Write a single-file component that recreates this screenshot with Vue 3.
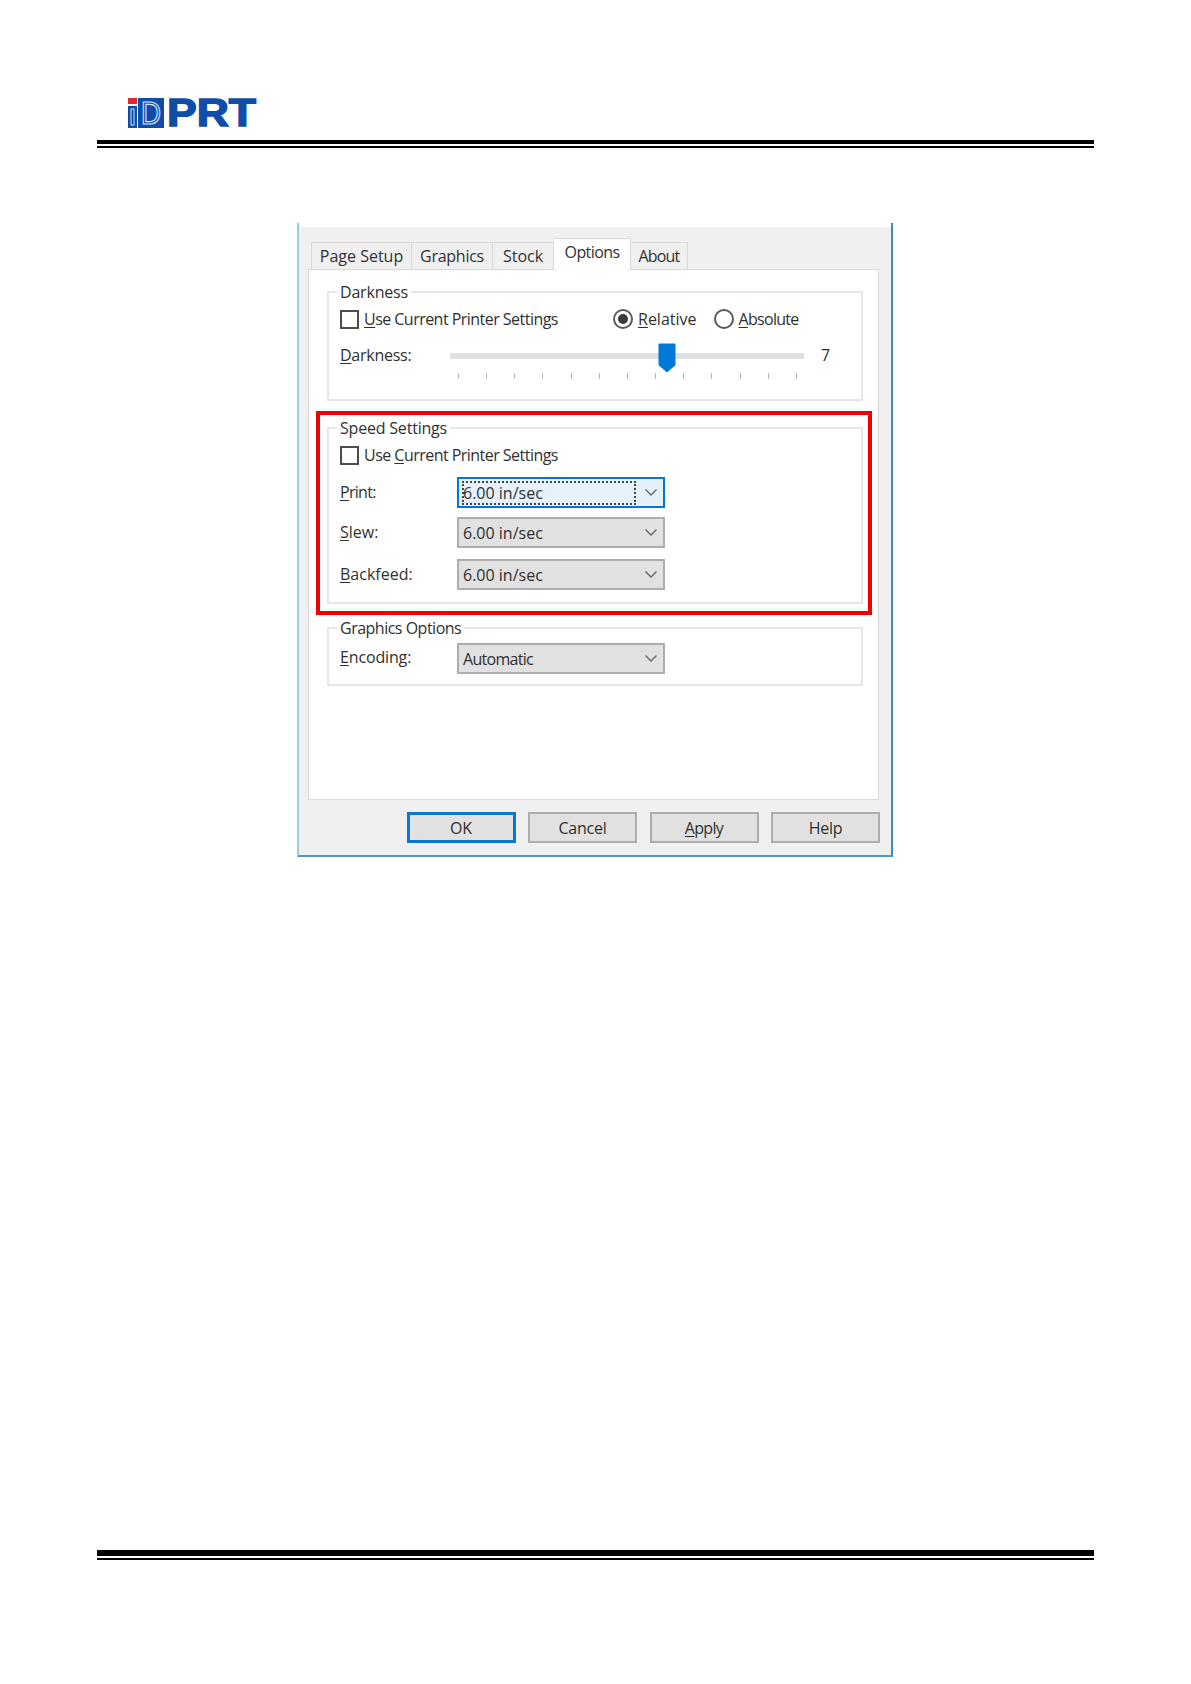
<script setup>
const ticks = Array.from({ length: 13 }, (_, i) => i)
const speedRows = [
  { label: 'P', rest: 'rint:', value: '6.00 in/sec', focus: true, cls: 'r1', tight: 'ls-print' },
  { label: 'S', rest: 'lew:', value: '6.00 in/sec', focus: false, cls: 'r2', tight: '' },
  { label: 'B', rest: 'ackfeed:', value: '6.00 in/sec', focus: false, cls: 'r3', tight: '' }
]
const buttons = [
  { key: '', post: 'OK', primary: true, tight: '' },
  { key: '', post: 'Cancel', tight: 'ls-small' },
  { key: 'A', post: 'pply', tight: 'ls-apply' },
  { key: '', post: 'Help', tight: 'ls-small' }
]
</script>

<template>
  <div class="page">
    <header class="head">
      <svg class="logo" width="130" height="46" viewBox="0 -8 130 46" aria-label="iDPRT">
        <rect x="1" y="0" width="9" height="6" fill="#e0262e" />
        <rect x="1" y="8" width="9" height="22" fill="#0f4ea8" />
        <rect x="4" y="11" width="3" height="16" fill="none" stroke="#cfe0f5" stroke-width="1" />
        <rect x="11" y="0" width="26" height="30" fill="#0f4ea8" />
        <text x="14" y="26" class="logo-d" font-size="31" textLength="20" lengthAdjust="spacingAndGlyphs">D</text>
        <text x="40" y="28" class="logo-prt" font-size="39" textLength="89" lengthAdjust="spacingAndGlyphs">PRT</text>
      </svg>
      <div class="rule-thick"></div>
      <div class="rule-thin"></div>
    </header>

    <section class="dialog">
      <div class="strip"></div>
      <div class="tabs">
        <div class="tab t1">Page Setup</div>
        <div class="tab t2 ls-small">Graphics</div>
        <div class="tab t3">Stock</div>
        <div class="tab t4 active">Options</div>
        <div class="tab t5">About</div>
      </div>

      <div class="panel">
        <div class="group g-dark">
          <div class="legend">Darkness</div>
          <div class="check-row">
            <label class="check"><span class="box"></span><span class="ls-check"><u>U</u>se Current Printer Settings</span></label>
            <div class="radios">
              <span class="radio on"><i></i></span><span class="rl"><u>R</u>elative</span>
              <span class="radio r-abs"><i></i></span><span class="rl ls-abs"><u>A</u>bsolute</span>
            </div>
          </div>
          <div class="slider-row">
            <span class="slabel"><u>D</u>arkness:</span>
            <div class="slider">
              <div class="track"></div>
              <svg class="thumb" width="18" height="30" viewBox="0 0 18 30"><path d="M1 1h16v21l-8 7-8-7z" fill="#0078d7" stroke="#0078d7" stroke-linejoin="round" /></svg>
              <div class="ticks"><span v-for="t in ticks" :key="t" class="tick"></span></div>
            </div>
            <span class="value">7</span>
          </div>
        </div>

        <div class="group g-speed">
          <div class="legend">Speed Settings</div>
          <div class="check-row">
            <label class="check"><span class="box"></span><span class="ls-check">Use <u>C</u>urrent Printer Settings</span></label>
          </div>
          <div v-for="r in speedRows" :key="r.label" class="combo-row" :class="r.cls">
            <span class="clabel" :class="r.tight"><u>{{ r.label }}</u>{{ r.rest }}</span>
            <div class="combo" :class="{ focus: r.focus }">
              <span class="ctext">{{ r.value }}</span>
              <svg class="chev" width="14" height="9" viewBox="0 0 14 9"><path d="M1.5 1.5 7 7l5.500-5.500" fill="none" stroke="#666" stroke-width="1.400" /></svg>
            </div>
          </div>
        </div>

        <div class="group g-gfx">
          <div class="legend ls-gfx">Graphics Options</div>
          <div class="combo-row r4">
            <span class="clabel enc"><u>E</u>ncoding:</span>
            <div class="combo">
              <span class="ctext ls-auto">Automatic</span>
              <svg class="chev" width="14" height="9" viewBox="0 0 14 9"><path d="M1.5 1.5 7 7l5.500-5.500" fill="none" stroke="#666" stroke-width="1.400" /></svg>
            </div>
          </div>
        </div>
      </div>

      <div class="actions">
        <button v-for="b in buttons" :key="b.post" class="btn" :class="[{ primary: b.primary }, b.tight]" type="button"><u v-if="b.key">{{ b.key }}</u>{{ b.post }}</button>
      </div>

      <div class="callout"></div>
    </section>

    <footer class="foot">
      <div class="frule-thick"></div>
      <div class="rule-thin"></div>
    </footer>
  </div>
</template>

<style scoped>
.page {
  width: 1191px;
  height: 1684px;
  background: #fff;
  overflow: hidden;
  font-family: "Open Sans", "Noto Sans", sans-serif;
  color: #303030;
  font-size: 16px;
}
u { text-underline-offset: 2px; text-decoration-thickness: 1px; }
.head { padding: 98px 97px 0; }
.logo { display: block; margin: -8px 0 -7px 30px; }
.logo-d { font-family: "Liberation Sans", sans-serif; fill: none; stroke: #d5e3f6; stroke-width: 1.200px; }
.logo-prt { font-family: "Liberation Sans", sans-serif; font-weight: 700; fill: #0f4ea8; stroke: #0f4ea8; stroke-width: 1.500px; }
.rule-thick { height: 4px; background: #000; margin-top: 11px; }
.rule-thin { height: 2px; background: #000; margin-top: 2px; }

.dialog {
  position: relative;
  box-sizing: border-box;
  width: 596px;
  height: 634px;
  margin: 75px 0 0 297px;
  border-left: 2px solid #9ccbe6;
  border-right: 2px solid #3a8cc8;
  border-bottom: 2px solid #4f97c9;
  background: #f0f0f0;
}
.strip { height: 4px; background: #fff; }

.tabs { display: flex; align-items: flex-end; height: 42px; padding-left: 12px; }
.tab {
  box-sizing: border-box;
  height: 27px;
  display: flex;
  align-items: center;
  justify-content: center;
  border: 1px solid #d9d9d9;
  border-bottom: 0;
  border-left-width: 0;
  line-height: 1;
}
.t1 { width: 101px; border-left-width: 1px; }
.t2 { width: 81px; }
.t3 { width: 61px; }
.t4 { width: 77px; letter-spacing: -0.6px; }
.t5 { width: 57px; letter-spacing: -0.8px; }
.active {
  height: 32px;
  background: #fff;
  margin-bottom: -1px;
  position: relative;
  z-index: 1;
  padding-bottom: 5px;
}

.panel {
  box-sizing: border-box;
  width: 571px;
  height: 531px;
  margin-left: 9px;
  padding: 21px 15px 0 18px;
  background: #fff;
  border: 1px solid #d9d9d9;
}
.group {
  box-sizing: border-box;
  border: 2px solid #e6e6e6;
  padding-left: 11px;
  padding-right: 11px;
}
.g-dark { height: 110px; }
.g-speed { height: 177px; margin-top: 26px; }
.g-gfx { height: 59px; margin-top: 23px; }
.legend {
  display: table;
  height: 22px;
  line-height: 22px;
  margin: -12px 0 0 -3px;
  padding: 0 3px;
  background: #fff;
  letter-spacing: -0.2px;
}
.ls-small { letter-spacing: -0.25px; }
.ls-check { letter-spacing: -0.53px; }
.ls-abs { letter-spacing: -0.7px; }
.ls-gfx { letter-spacing: -0.5px; }
.ls-print { letter-spacing: -0.7px; }
.ls-auto { letter-spacing: -0.7px; }
.ls-apply { letter-spacing: -0.7px; }

.check-row { display: flex; align-items: center; height: 30px; margin-top: 1px; }
.check { display: flex; align-items: center; gap: 5px; width: 273px; flex: none; }
.box { box-sizing: border-box; width: 19px; height: 19px; border: 2px solid #4d4d4d; background: #fff; flex: none; }
.radios { display: flex; align-items: center; }
.radio {
  box-sizing: border-box;
  width: 20px;
  height: 20px;
  border: 2px solid #5a5a5a;
  border-radius: 50%;
  display: flex;
  align-items: center;
  justify-content: center;
}
.radio i { width: 10px; height: 10px; border-radius: 50%; }
.radio.on i { background: #3a3a3a; }
.rl { margin-left: 5px; }
.r-abs { margin-left: 17px; }

.slider-row { display: flex; margin-top: 7px; height: 30px; align-items: center; }
.slabel { width: 110px; flex: none; padding-bottom: 2px; letter-spacing: -0.25px; }
.slider { position: relative; width: 354px; height: 30px; flex: none; }
.track { position: absolute; left: 0; right: 0; top: 12px; height: 6px; background: #e0e0e0; }
.thumb { position: absolute; left: 208px; top: 2px; }
.ticks {
  position: absolute;
  left: 8px;
  width: 339px;
  top: 32px;
  display: flex;
  justify-content: space-between;
}
.tick { width: 1px; height: 6px; background: #b5b5b5; }
.value { margin-left: 17px; padding-bottom: 2px; }

.combo-row { display: flex; align-items: center; }
.clabel { width: 117px; flex: none; padding-bottom: 2px; }
.clabel.enc { padding-bottom: 4px; letter-spacing: -0.15px; }
.r1 { margin-top: 7px; }
.r2 { margin-top: 9px; }
.r3 { margin-top: 11px; }
.r4 { margin-top: 4px; }
.combo {
  box-sizing: border-box;
  width: 208px;
  height: 31px;
  position: relative;
  display: flex;
  align-items: center;
  padding-left: 4px;
  background: #e1e1e1;
  border: 2px solid #adadad;
}
.combo.focus { background: #e5f1fb; border-color: #0078d7; }
.combo.focus .ctext { outline: 2px dotted #444; outline-offset: -1px; }
.ctext {
  box-sizing: border-box;
  width: 172px;
  height: 22px;
  line-height: 22px;
}
.chev { position: absolute; right: 5px; top: 9px; }

.actions { display: flex; justify-content: flex-end; gap: 12.5px; padding: 12px 11px 0 0; }
.btn {
  box-sizing: border-box;
  width: 109px;
  height: 31px;
  padding: 0;
  font-family: inherit;
  font-size: 16px;
  color: inherit;
  background: #e1e1e1;
  border: 2px solid #adadad;
}
.btn.primary { border: 3px solid #0a78d0; }

.callout {
  position: absolute;
  left: 17px;
  top: 188px;
  width: 556px;
  height: 204px;
  box-sizing: border-box;
  border: 4px solid #f00000;
  pointer-events: none;
}

.foot { padding: 693px 97px 0; }
.frule-thick { height: 6px; background: #000; }
</style>
